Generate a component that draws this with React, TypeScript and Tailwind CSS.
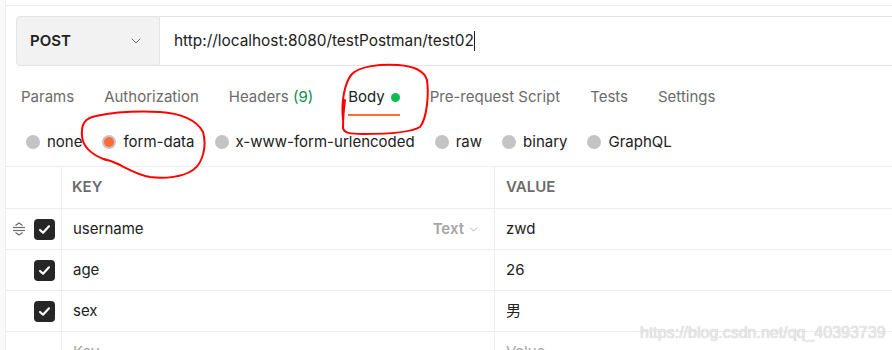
import React from "react";
import { ChevronDown } from "lucide-react";

const tabs = [
  { id: "params", label: "Params" },
  { id: "auth", label: "Authorization" },
  { id: "headers", label: "Headers", count: 9 },
  { id: "body", label: "Body", active: true },
  { id: "pre", label: "Pre-request Script" },
  { id: "tests", label: "Tests" },
  { id: "settings", label: "Settings" }
];

const bodyTypes = ["none", "form-data", "x-www-form-urlencoded", "raw", "binary", "GraphQL"];

const rows = [
  { key: "username", value: "zwd", hover: true },
  { key: "age", value: "26" },
  { key: "sex", value: "男" }
];

function Checkbox() {
  return (
    <div className="w-[21px] h-[21px] rounded-[4px] bg-[#262626] flex items-center justify-center">
      <svg width="13" height="13" viewBox="0 0 16 16" fill="none">
        <path d="M2.5 8.5 L6.2 12 L13.5 4" stroke="white" strokeWidth="2.6" strokeLinecap="round" strokeLinejoin="round" />
      </svg>
    </div>
  );
}

function DragHandle() {
  return (
    <svg width="14" height="14" viewBox="0 0 14 14" fill="none" stroke="#6b6b6b" strokeWidth="1.2">
      <path d="M3.5 3.5 L7 1 L10.5 3.5" />
      <path d="M1 5.5 H13" />
      <path d="M1 8.5 H13" />
      <path d="M3.5 10.5 L7 13 L10.5 10.5" />
    </svg>
  );
}

function Annotations() {
  return (
    <svg className="absolute inset-0 pointer-events-none" width="892" height="350" fill="none" stroke="#ff0000" strokeWidth="2" strokeLinecap="round" strokeLinejoin="round">
      <path d="M343 120 C341 100 345 82 352 74 C360 66 380 64 398 65 C412 66 424 70 427 80 C429 95 427 118 420 127 C410 133 385 134 363 134 C350 134 344 133 343 128 C343 118 344 108 345 100" />
      <path d="M106 160 C92 155 83 148 82 136 C81 124 85 118 96 116 C115 112 140 111 160 112 C180 113 197 120 203 132 C207 146 203 163 193 170 C183 177 165 179 150 177 C138 175 128 169 118 164 C112 161 108 160 104 159" />
    </svg>
  );
}

export default function App() {
  return (
    <div
      className="relative w-[892px] h-[350px] overflow-hidden bg-white flex"
      style={{ fontFamily: "Inter, 'Noto Sans CJK SC', sans-serif" }}
    >
      <div className="w-[6px] shrink-0 bg-[#f9f9f9] border-r border-[#ededed]" />

      <div className="flex-1 flex flex-col">
        <div className="h-[6px] shrink-0 border-b border-[#ededed]" />

        <div className="pl-[10px] pt-[10px]">
          <div className="flex h-[50px]">
            <div className="w-[144px] shrink-0 bg-[#f2f2f2] border border-[#e4e4e4] rounded-l-[4px] flex items-center justify-between pl-[13px] pr-[15px]">
              <span className="text-[15px] font-semibold text-[#212121]">POST</span>
              <ChevronDown size={16} strokeWidth={1.5} className="text-[#6b6b6b]" />
            </div>
            <div className="flex-1 border-y border-[#e4e4e4] flex items-center pl-[14px]">
              <span className="text-[15.4px] text-[#212121]">http://localhost:8080/testPostman/test02</span>
              <span className="w-px h-[20px] bg-[#212121]" />
            </div>
          </div>

          <div className="flex items-center h-[62px] gap-[30px] pl-[5px]">
            {tabs.map((t) => (
              <div key={t.id} className={`relative h-full flex items-center ${t.active ? "ml-[5px]" : ""}`}>
                <span className={`text-[15px] ${t.active ? "text-[#212121]" : "text-[#6b6b6b]"}`}>
                  {t.label}
                  {t.count !== undefined && <span className="text-[#0d8a4f]"> ({t.count})</span>}
                </span>
                {t.active && <span className="ml-[6px] w-[9px] h-[9px] rounded-full bg-[#0cbb52]" />}
                {t.active && <span className="absolute left-0 right-0 bottom-[12px] h-[2px] bg-[#ff6c37]" />}
              </div>
            ))}
          </div>

          <div className="flex items-center h-[28px] gap-[20px] pl-[10px]">
            {bodyTypes.map((b) => (
              <div key={b} className="flex items-center gap-[7px]">
                {b === "form-data" ? (
                  <span className="w-[14px] h-[14px] rounded-full bg-[#c4c4c4] flex items-center justify-center">
                    <span className="w-[10px] h-[10px] rounded-full bg-[#ff6c37]" />
                  </span>
                ) : (
                  <span className="w-[14px] h-[14px] rounded-full bg-[#c4c4c4]" />
                )}
                <span className="text-[15px] text-[#212121]">{b}</span>
              </div>
            ))}
          </div>
        </div>

        <div className="mt-[10px] border-t border-[#ededed]">
          <div className="flex h-[42px] border-b border-[#ededed]">
            <div className="w-[56px] shrink-0 border-r border-[#ededed]" />
            <div className="w-[433px] shrink-0 border-r border-[#ededed] flex items-center pl-[10px]">
              <span className="text-[15px] font-semibold text-[#6b6b6b]">KEY</span>
            </div>
            <div className="flex-1 flex items-center pl-[11px]">
              <span className="text-[15px] font-semibold text-[#6b6b6b]">VALUE</span>
            </div>
          </div>

          {rows.map((r) => (
            <div key={r.key} className="flex h-[41px] border-b border-[#ededed]">
              <div className="w-[56px] shrink-0 border-r border-[#ededed] flex items-center justify-end pr-[6px] gap-[8px]">
                {r.hover && <DragHandle />}
                <Checkbox />
              </div>
              <div className="w-[433px] shrink-0 border-r border-[#ededed] flex items-center justify-between pl-[11px] pr-[14px]">
                <span className="text-[15px] text-[#212121]">{r.key}</span>
                {r.hover && (
                  <span className="flex items-center gap-[3px] text-[15px] font-semibold text-[#a6a6a6]">
                    Text
                    <ChevronDown size={13} strokeWidth={1.5} />
                  </span>
                )}
              </div>
              <div className="flex-1 flex items-center pl-[11px]">
                <span className="text-[15px] text-[#212121]">{r.value}</span>
              </div>
            </div>
          ))}

          <div className="flex h-[41px]">
            <div className="w-[56px] shrink-0 border-r border-[#ededed]" />
            <div className="w-[433px] shrink-0 border-r border-[#ededed] flex items-center pl-[11px]">
              <span className="text-[15px] text-[#a6a6a6]">Key</span>
            </div>
            <div className="flex-1 flex items-center pl-[11px]">
              <span className="text-[15px] text-[#a6a6a6]">Value</span>
            </div>
          </div>
        </div>
      </div>

      <div
        className="absolute left-[640px] top-[321px] text-[16px] text-[#e8e8e8] [text-shadow:0_0_1px_#bdbdbd]"
        style={{ fontFamily: "'Liberation Sans', Arial, sans-serif" }}
      >
        https://blog.csdn.net/qq_40393739
      </div>

      <Annotations />
    </div>
  );
}
